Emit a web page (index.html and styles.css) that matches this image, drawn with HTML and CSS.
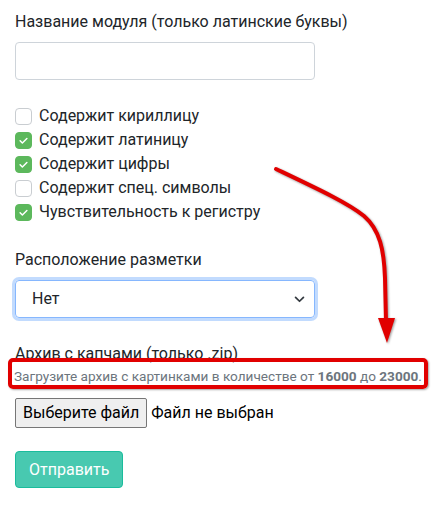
FILE: index.html
```html
<!DOCTYPE html>
<html lang="ru">
<head>
<meta charset="utf-8">
<link rel="stylesheet" href="styles.css">
</head>
<body>
<form class="form">
  <div class="field">
    <label class="label">Название модуля (только латинские буквы)</label>
    <input class="control" type="text">
  </div>
  <div class="checks">
    <label class="check"><span class="box"></span>Содержит кириллицу</label>
    <label class="check"><span class="box on"><svg viewBox="0 0 20 20" width="17" height="17"><path d="M5.5 10.3l3 3 6-6" fill="none" stroke="#fff" stroke-width="2" stroke-linecap="round" stroke-linejoin="round"/></svg></span>Содержит латиницу</label>
    <label class="check"><span class="box on"><svg viewBox="0 0 20 20" width="17" height="17"><path d="M5.5 10.3l3 3 6-6" fill="none" stroke="#fff" stroke-width="2" stroke-linecap="round" stroke-linejoin="round"/></svg></span>Содержит цифры</label>
    <label class="check"><span class="box"></span>Содержит спец. символы</label>
    <label class="check"><span class="box on"><svg viewBox="0 0 20 20" width="17" height="17"><path d="M5.5 10.3l3 3 6-6" fill="none" stroke="#fff" stroke-width="2" stroke-linecap="round" stroke-linejoin="round"/></svg></span>Чувствительность к регистру</label>
  </div>
  <div class="field">
    <label class="label">Расположение разметки</label>
    <div class="select">
      <span>Нет</span>
      <svg class="chev" viewBox="0 0 12 8" width="11" height="7"><path d="M1.5 1.5l4.5 4.5 4.5-4.5" fill="none" stroke="#343a40" stroke-width="2" stroke-linecap="round" stroke-linejoin="round"/></svg>
    </div>
  </div>
  <div class="field file-field">
    <label class="label tight">Архив с капчами (только .zip)</label>
    <div class="help">Загрузите архив с картинками в количестве от <b>16000</b> до <b>23000</b>.</div>
    <div class="file">
      <span class="file-btn">Выберите файл</span>
      <span class="file-name">Файл не выбран</span>
    </div>
  </div>
  <button class="submit" type="button">Отправить</button>
</form>

<div class="mark"></div>
<svg class="arrow" width="434" height="506" viewBox="0 0 434 506">
  <g class="arrow-g">
    <path d="M276 169 C318 189 348 203 364 216 C380 230 384 250 385 278 L386 322" fill="none" stroke="#e10000" stroke-width="4" stroke-linecap="round"/>
    <polygon points="378,318 395,318 387,343" fill="#e10000"/>
  </g>
</svg>
</body>
</html>
```
FILE: styles.css
```css
* { box-sizing: border-box; }
html, body { margin: 0; padding: 0; background: #fff; }
body {
  font-family: Roboto, "Noto Sans", sans-serif;
  font-size: 16px;
  line-height: 1.5;
  color: #212529;
  position: relative;
  width: 434px;
  height: 506px;
  overflow: hidden;
}
.form {
  padding: 10px 15px 0 15px;
  width: 434px;
}
.field { display: flex; flex-direction: column; align-items: flex-start; }
.label { display: block; margin-bottom: 8px; white-space: nowrap; }
.label.tight { margin-bottom: 0; }
.control {
  width: 300px;
  height: 38px;
  border: 1px solid #ced4da;
  border-radius: 4px;
  font: inherit;
  padding: 6px 12px;
  margin: 0;
}
.checks {
  margin-top: 24px;
  display: flex;
  flex-direction: column;
}
.check {
  display: flex;
  align-items: center;
  height: 24px;
  white-space: nowrap;
}
.box {
  width: 17px;
  height: 17px;
  border: 1px solid #c9cdd1;
  border-radius: 4px;
  margin-right: 7px;
  flex: none;
  display: flex;
  align-items: center;
  justify-content: center;
  background: #fff;
}
.box.on { background: #5cb85c; border-color: #5cb85c; }
.box svg { display: block; }
.checks + .field { margin-top: 24px; }
.select {
  width: 300px;
  height: 38px;
  border: 1px solid #86b7fe;
  border-radius: 4px;
  box-shadow: 0 0 0 3px rgba(13, 110, 253, 0.25);
  display: flex;
  align-items: center;
  justify-content: space-between;
  padding: 0 9px 0 16px;
}
.chev { display: block; }
.file-field { margin-top: 24px; }
.help {
  font-size: 13.6px;
  line-height: 21px;
  color: #6c757d;
  margin-left: -1px;
  white-space: nowrap;
}
.help b { font-weight: 700; }
.file {
  margin-top: 11px;
  display: flex;
  align-items: center;
  height: 30px;
}
.file-btn {
  height: 30px;
  display: flex;
  align-items: center;
  padding: 0 7px;
  background: #efefef;
  border: 1px solid #767676;
  border-radius: 2px;
  color: #000;
}
.file-name { margin-left: 4px; color: #000; }
.submit {
  margin-top: 23px;
  height: 37px;
  padding: 0 13px;
  border: 1px solid #1abc9c;
  border-radius: 4px;
  background: #48c9b0;
  color: #fff;
  font: inherit;
  display: block;
}
.mark {
  position: absolute;
  left: 8px;
  top: 358px;
  width: 420px;
  height: 31px;
  border: 4px solid #e10000;
  border-radius: 5px;
  box-shadow: 1px 1px 2px rgba(0,0,0,0.35);
}
.arrow {
  position: absolute;
  left: 0;
  top: 0;
  pointer-events: none;
}
.arrow-g { filter: drop-shadow(1px 1px 1px rgba(0,0,0,0.4)); }
```
